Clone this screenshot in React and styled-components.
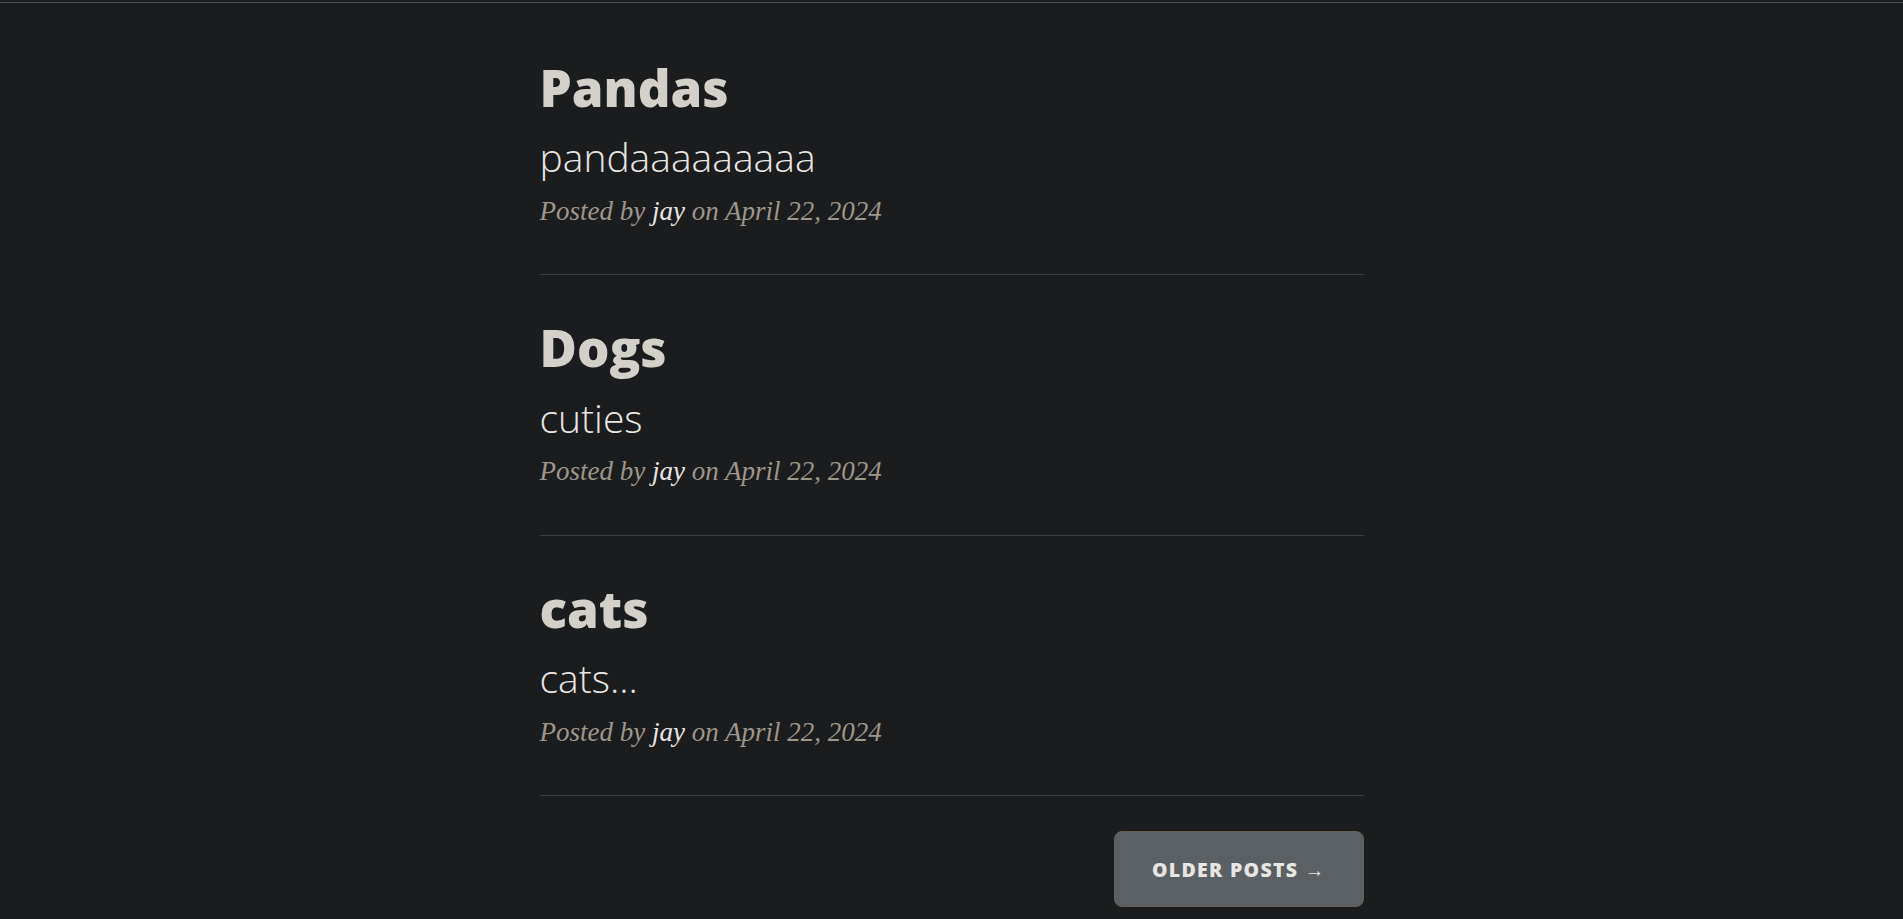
import React from "react";
import styled, { createGlobalStyle } from "styled-components";

const Global = createGlobalStyle`
  html, body { margin: 0; padding: 0; background: #1b1c1e; }
  body { font-family: "Open Sans", "Liberation Sans", sans-serif; color: #e8e6e3; }
  * { box-sizing: border-box; }
`;

const Page = styled.div`
  min-height: 919px;
  background: #1b1c1e;
`;

const TopBar = styled.div`
  height: 3px;
  border-bottom: 1px solid #4e4f50;
`;

const Main = styled.main`
  display: flex;
  justify-content: center;
  padding-top: 12px;
`;

const Column = styled.div`
  width: 824px;
  display: flex;
  flex-direction: column;
`;

const Post = styled.article`
  display: flex;
  flex-direction: column;
  padding: 42px 0 43px;
`;

const Title = styled.h2`
  margin: 0;
  font-family: "Open Sans", sans-serif;
  font-weight: 800;
  font-size: 51px;
  line-height: 1.2;
  color: #d3d0c9;
`;

const Subtitle = styled.h3`
  margin: 16px 0 0;
  font-family: "Open Sans", sans-serif;
  font-weight: 300;
  font-size: 39px;
  line-height: 1.2;
  color: #e8e6e3;
`;

const Meta = styled.p`
  margin: 10px 0 0;
  font-family: "Liberation Serif", serif;
  font-style: italic;
  font-size: 27px;
  line-height: 1.5;
  color: #9d968b;
`;

const Author = styled.a`
  color: #e8e6e3;
  text-decoration: none;
`;

const Divider = styled.hr`
  margin: 0;
  border: 0;
  border-top: 1px solid #3b3e41;
  height: 0;
`;

const Pager = styled.div`
  display: flex;
  justify-content: flex-end;
  padding-top: 35px;
`;

const Button = styled.a`
  display: inline-flex;
  align-items: center;
  justify-content: center;
  height: 76px;
  padding: 0 37px;
  background: #5a6064;
  border: 1px solid #675f53;
  border-radius: 8px;
  font-family: "Open Sans", sans-serif;
  font-weight: 800;
  font-size: 19.5px;
  letter-spacing: 1.3px;
  text-transform: uppercase;
  color: #e8e6e3;
  text-decoration: none;
`;

const posts = [
  { title: "Pandas", subtitle: "pandaaaaaaaaa" },
  { title: "Dogs", subtitle: "cuties" },
  { title: "cats", subtitle: "cats..." },
];

export default function App() {
  return (
    <Page>
      <Global />
      <TopBar />
      <Main>
        <Column>
          {posts.map((p) => (
            <React.Fragment key={p.title}>
              <Post>
                <Title>{p.title}</Title>
                <Subtitle>{p.subtitle}</Subtitle>
                <Meta>
                  Posted by <Author href="#">jay</Author> on April 22, 2024
                </Meta>
              </Post>
              <Divider />
            </React.Fragment>
          ))}
          <Pager>
            <Button href="#">Older Posts →</Button>
          </Pager>
        </Column>
      </Main>
    </Page>
  );
}
